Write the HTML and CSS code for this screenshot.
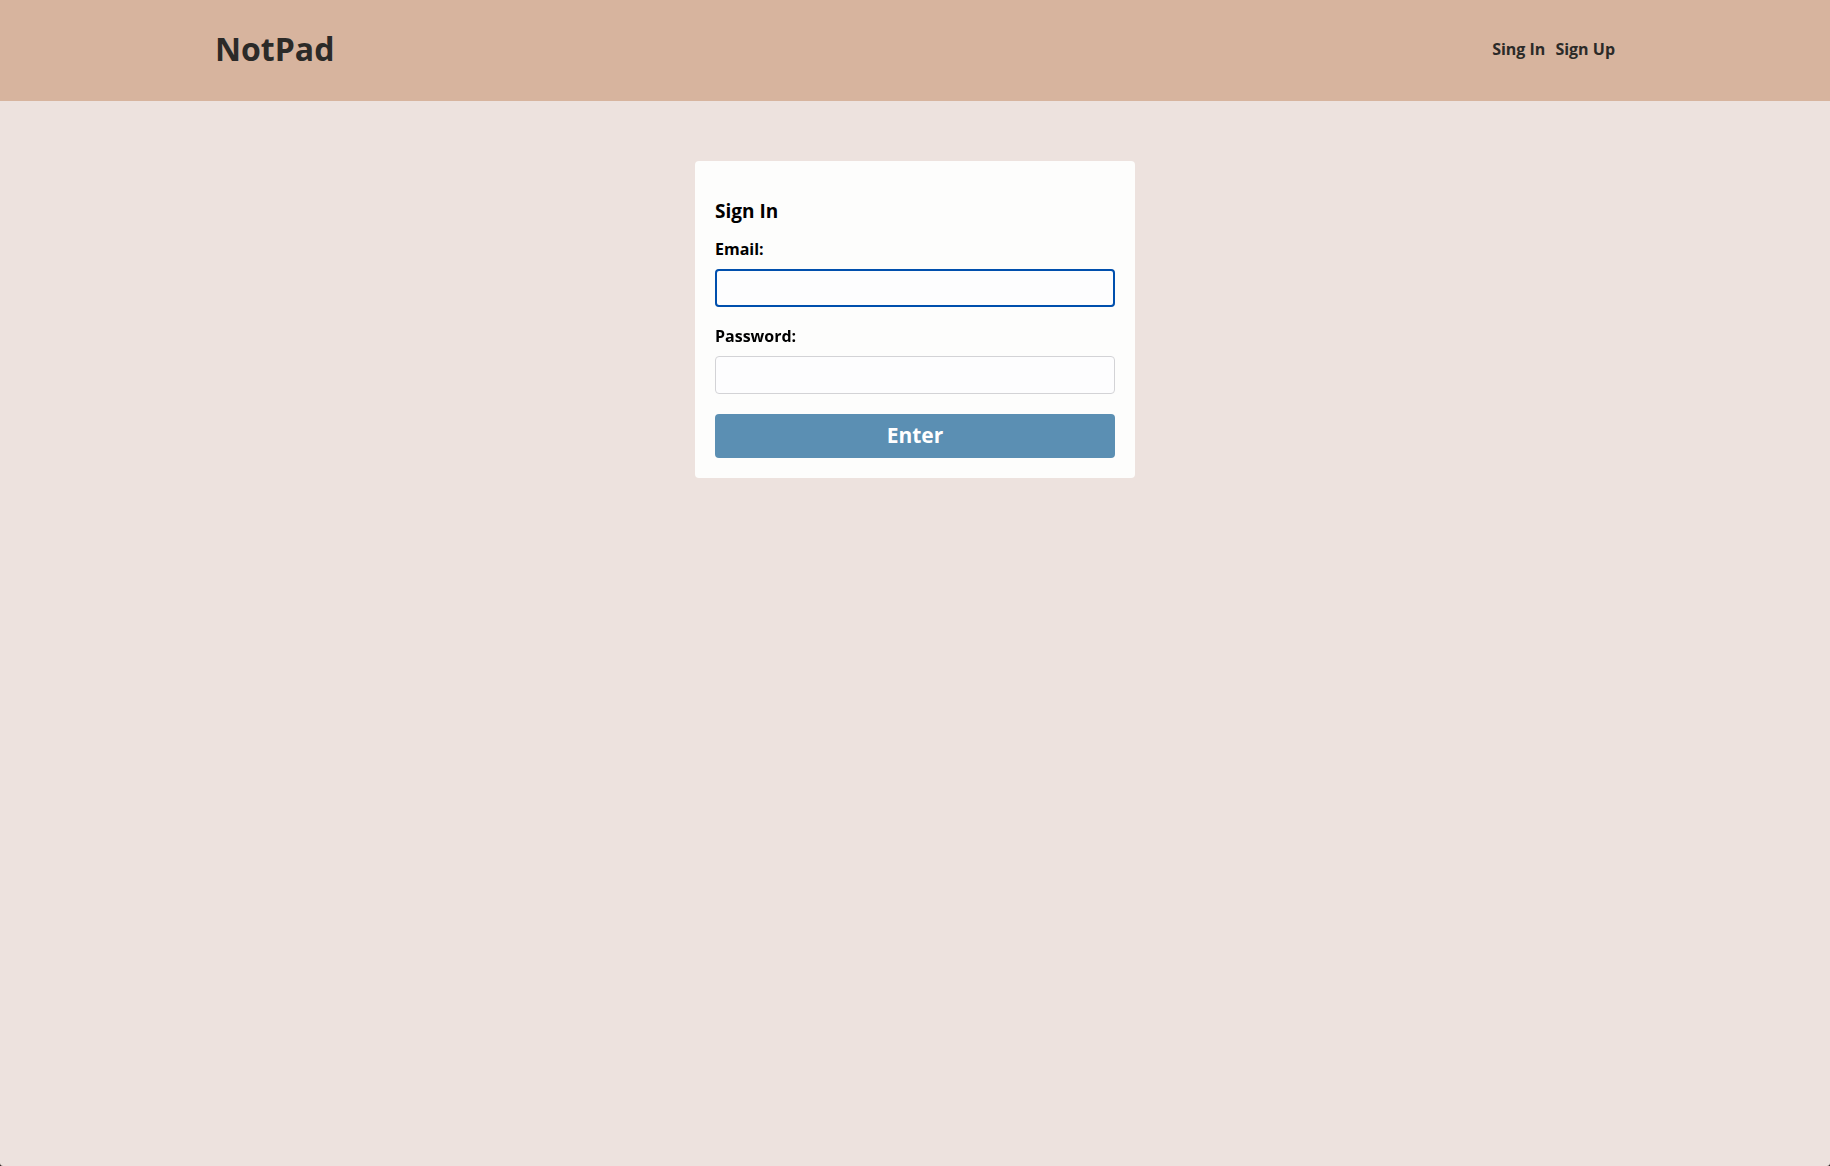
FILE: index.html
```html
<!DOCTYPE html>
<html lang="en">
<head>
  <meta charset="utf-8">
  <meta name="viewport" content="width=device-width, initial-scale=1">
  <title>NotPad</title>
  <link rel="stylesheet" href="styles.css">
</head>
<body>
  <div class="page">
    <header class="header">
      <div class="header-inner">
        <a class="brand" href="#">NotPad</a>
        <nav class="nav">
          <a class="nav-link" href="#">Sing In</a>
          <a class="nav-link" href="#">Sign Up</a>
        </nav>
      </div>
    </header>
    <main class="main">
      <form class="card">
        <h1 class="title">Sign In</h1>
        <div class="field">
          <label class="label" for="email">Email:</label>
          <input class="input" id="email" type="email" autofocus>
        </div>
        <div class="field">
          <label class="label" for="password">Password:</label>
          <input class="input" id="password" type="password">
        </div>
        <button class="submit" type="submit">Enter</button>
      </form>
    </main>
  </div>
</body>
</html>
```
FILE: styles.css
```css
* {
  box-sizing: border-box;
}

html {
  background: #241c1a;
}

body {
  margin: 0;
  font-family: "Open Sans", "Noto Sans", sans-serif;
  font-size: 16px;
  font-weight: 700;
  color: #000;
}

.page {
  min-height: 100vh;
  background: #ede2de;
  border-radius: 0 0 3px 3px;
}

.header {
  padding: 0 20px;
  background: #d7b49e;
}

.header-inner {
  display: flex;
  align-items: center;
  justify-content: space-between;
  max-width: 1400px;
  margin: 0 auto;
  padding: 24px 0 27px;
}

.brand {
  font-size: 32px;
  line-height: 50px;
  color: #2b2a28;
  text-decoration: none;
}

.nav {
  display: flex;
  gap: 10px;
}

.nav-link {
  font-size: 16px;
  line-height: 20px;
  color: #2b2a28;
  text-decoration: none;
}

.main {
  padding: 60px 20px;
}

.card {
  display: flex;
  flex-direction: column;
  gap: 20px;
  max-width: 440px;
  margin: 0 auto;
  padding: 35px 20px 20px;
  background: #fdfdfc;
  border-radius: 4px;
}

.title {
  margin: 0 0 -7px;
  font-size: 19px;
  line-height: 30px;
}

.field {
  display: flex;
  flex-direction: column;
  gap: 10px;
}

.field + .field {
  margin-top: -1px;
}

.label {
  font-size: 16px;
  line-height: 20px;
}

.input {
  width: 100%;
  height: 38px;
  padding: 8px;
  border: 1px solid #d3d3d6;
  border-radius: 4px;
  background: #fdfdfe;
  font: inherit;
}

.input:focus {
  outline: 2px solid #004fad;
  outline-offset: -2px;
}

.submit {
  height: 44px;
  padding: 0 20px 2px;
  border: 0;
  border-radius: 4px;
  background: #5b8fb3;
  color: #fff;
  font: inherit;
  font-size: 21px;
  cursor: pointer;
}
```
